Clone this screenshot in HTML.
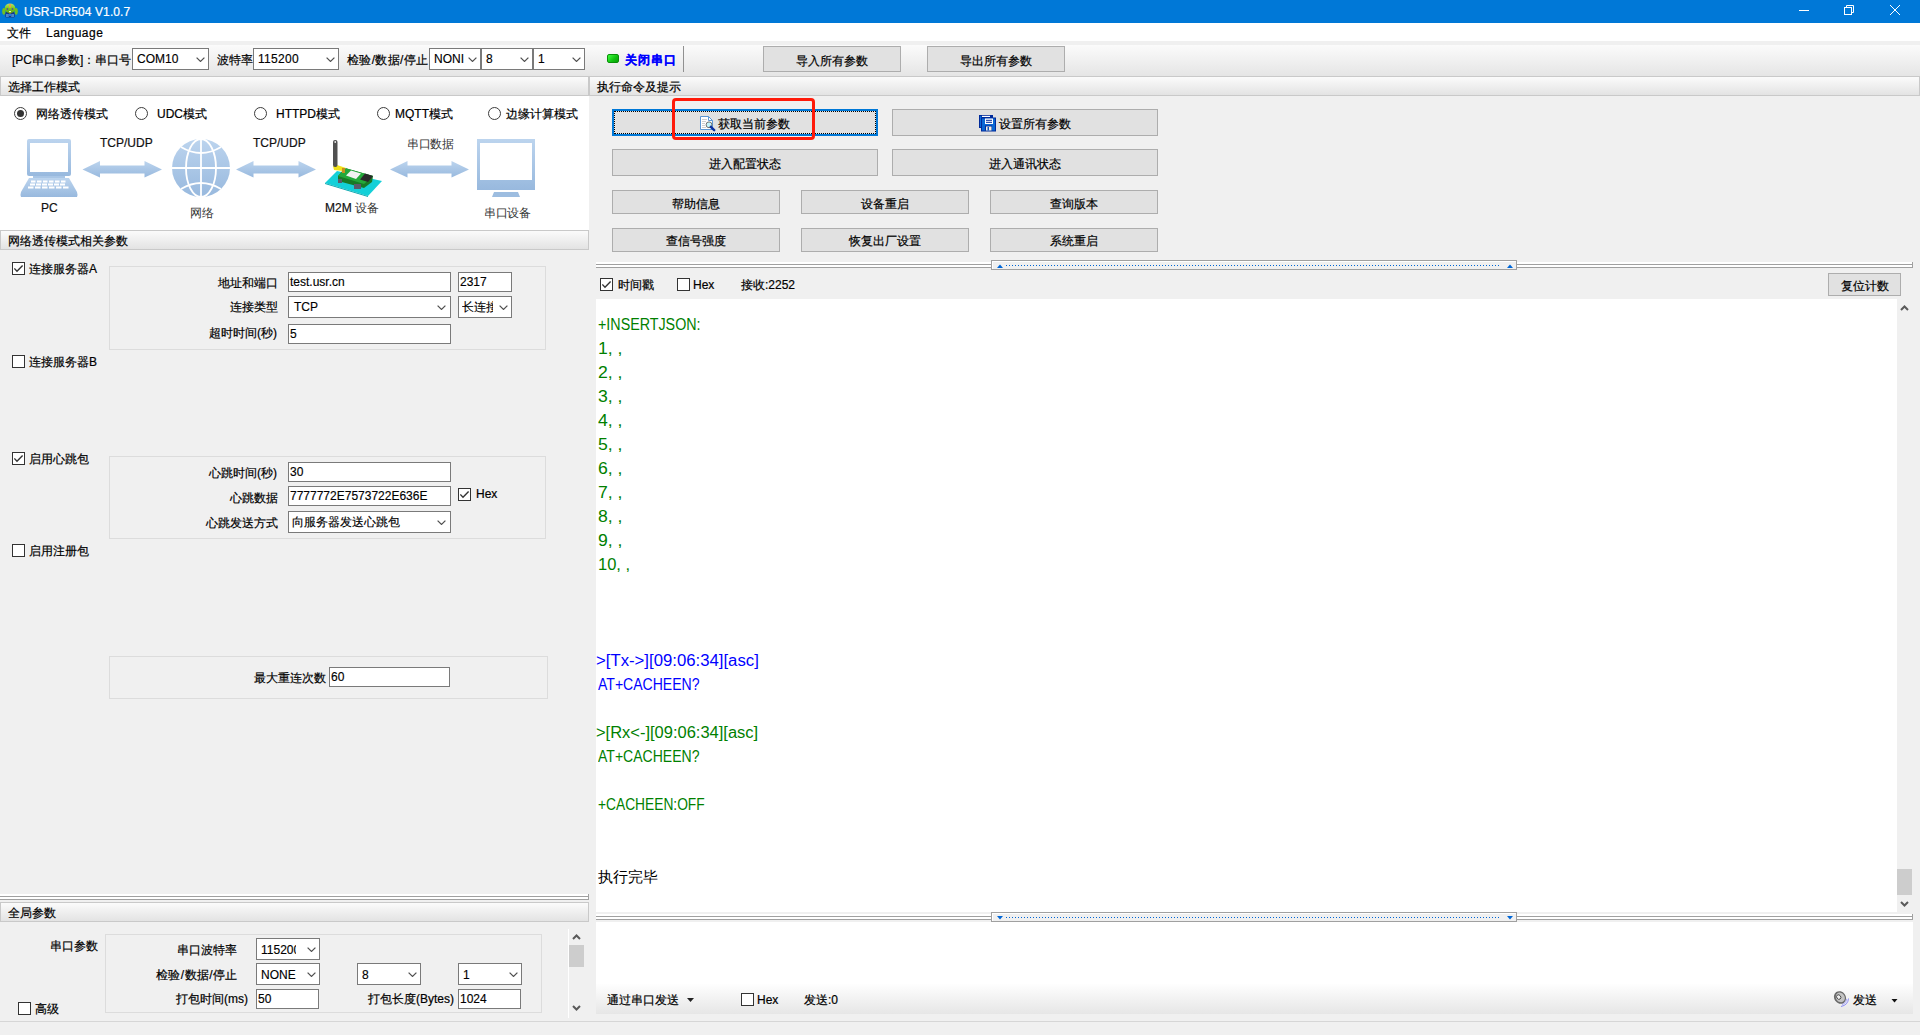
<!DOCTYPE html>
<html><head><meta charset="utf-8">
<style>
*{box-sizing:border-box}
html,body{margin:0;padding:0}
body{width:1920px;height:1035px;overflow:hidden;position:relative;background:#f0f0f0;font-family:"Liberation Sans",sans-serif;font-size:12px;color:#000}
.a{position:absolute}
.t{position:absolute;white-space:nowrap;line-height:14px;height:14px;-webkit-text-stroke:0.2px currentColor}
.hdr{position:absolute;height:20px;border:1px solid #c9c9c9;background:linear-gradient(#fbfbfb,#e3e3e3)}
.hdr span{position:absolute;left:7px;top:3px;line-height:14px;white-space:nowrap;-webkit-text-stroke:0.2px #000}
.btn{position:absolute;background:#e1e1e1;border:1px solid #adadad;text-align:center;white-space:nowrap}
.btn .t{left:0;right:0}
.inp{position:absolute;background:#fff;border:1px solid #7a7a7a;white-space:nowrap;overflow:hidden}
.inp span{position:absolute;left:2px;line-height:14px;-webkit-text-stroke:0.15px #000}
.chev{position:absolute;width:9px;height:5px}
.cb{position:absolute;width:13px;height:13px;border:1px solid #333;background:#fff}
.rd{position:absolute;width:13px;height:13px;border:1px solid #3c3c3c;border-radius:50%;background:#fff}
.grp{position:absolute;border:1px solid #dcdcdc}
.out{white-space:nowrap;font-size:16px;line-height:24px;height:24px}
.ck{-webkit-text-stroke:0.15px #000}
</style></head><body>
<div class="a" style="left:0;top:0;width:1920px;height:23px;background:#0078d7"></div>
<svg class="a" style="left:0;top:0" width="22" height="22" viewBox="0 0 22 22">
<defs><linearGradient id="gh" x1="0" y1="0" x2="0" y2="1"><stop offset="0" stop-color="#b8e070"/><stop offset="0.5" stop-color="#7cc81c"/><stop offset="1" stop-color="#5aa812"/></linearGradient></defs>
<rect x="5.3" y="12" width="9.4" height="5.5" rx="1" fill="#163a8c"/>
<rect x="6" y="14" width="2.8" height="3" fill="#4a86c8"/><rect x="11.2" y="14" width="2.8" height="3" fill="#4a86c8"/>
<rect x="9" y="14" width="2" height="2" fill="#1a7ae0"/>
<ellipse cx="3.8" cy="11.3" rx="1.6" ry="3.4" fill="#72c020"/><ellipse cx="16.2" cy="11.3" rx="1.6" ry="3.4" fill="#72c020"/>
<ellipse cx="10" cy="8.3" rx="5.3" ry="4.9" fill="url(#gh)"/>
<rect x="9.1" y="4" width="1.8" height="3.6" fill="#f0a040"/>
<circle cx="7.4" cy="9" r="0.9" fill="#5a4aa0"/><circle cx="12.5" cy="9" r="0.9" fill="#5a4aa0"/>
<rect x="9" y="11" width="2" height="0.9" fill="#f0f0f0"/>
<rect x="9.2" y="12.3" width="1.6" height="1.2" fill="#d0a020"/>
</svg>
<div class="t" style="left:24px;top:5px;color:#fff;letter-spacing:0.1px">USR-DR504 V1.0.7</div>
<div class="a" style="left:1799px;top:10px;width:10px;height:1px;background:#fff"></div>
<svg class="a" style="left:1843px;top:4px" width="12" height="12" viewBox="0 0 12 12"><rect x="1.5" y="3.5" width="7" height="7" fill="none" stroke="#fff"/><path d="M3.5 3.5 L3.5 1.5 L10.5 1.5 L10.5 8.5 L8.5 8.5" fill="none" stroke="#fff"/></svg>
<svg class="a" style="left:1889px;top:4px" width="12" height="12" viewBox="0 0 12 12"><path d="M1 1 L11 11 M11 1 L1 11" stroke="#fff" stroke-width="1"/></svg>
<div class="a" style="left:0;top:23px;width:1920px;height:18px;background:#fff"></div>
<div class="t" style="left:7px;top:26px;">文件</div>
<div class="t" style="left:46px;top:26px;letter-spacing:0.5px">Language</div>
<div class="a" style="left:0;top:45px;width:1920px;height:31px;background:linear-gradient(#fbfbfb,#e5e5e5)"></div>
<div class="t" style="left:12px;top:53px;">[PC串口参数]：串口号</div>
<div class="inp" style="left:132px;top:48px;width:77px;height:22px"><span style="top:3px;left:4px;">COM10</span><svg class="chev" style="left:63px;top:8px" viewBox="0 0 9 5"><path d="M0.6 0.6L4.5 4.4L8.4 0.6" fill="none" stroke="#505050" stroke-width="1.25"/></svg></div>
<div class="t" style="left:217px;top:53px;">波特率</div>
<div class="inp" style="left:253px;top:48px;width:86px;height:22px"><span style="top:3px;left:4px;letter-spacing:0.3px">115200</span><svg class="chev" style="left:72px;top:8px" viewBox="0 0 9 5"><path d="M0.6 0.6L4.5 4.4L8.4 0.6" fill="none" stroke="#505050" stroke-width="1.25"/></svg></div>
<div class="t" style="left:347px;top:53px;letter-spacing:0.35px">检验/数据/停止</div>
<div class="inp" style="left:429px;top:48px;width:52px;height:22px"><span style="top:3px;left:4px;width:33px;overflow:hidden">NONI</span><svg class="chev" style="left:38px;top:8px" viewBox="0 0 9 5"><path d="M0.6 0.6L4.5 4.4L8.4 0.6" fill="none" stroke="#505050" stroke-width="1.25"/></svg></div>
<div class="inp" style="left:481px;top:48px;width:52px;height:22px"><span style="top:3px;left:4px;">8</span><svg class="chev" style="left:38px;top:8px" viewBox="0 0 9 5"><path d="M0.6 0.6L4.5 4.4L8.4 0.6" fill="none" stroke="#505050" stroke-width="1.25"/></svg></div>
<div class="inp" style="left:533px;top:48px;width:52px;height:22px"><span style="top:3px;left:4px;">1</span><svg class="chev" style="left:38px;top:8px" viewBox="0 0 9 5"><path d="M0.6 0.6L4.5 4.4L8.4 0.6" fill="none" stroke="#505050" stroke-width="1.25"/></svg></div>
<div class="a" style="left:607px;top:54px;width:12px;height:9px;border-radius:2px;background:linear-gradient(135deg,#40ff40,#10c010 60%,#08a008);border:1px solid #089008"></div>
<div class="t" style="left:625px;top:53px;color:#0000ff;font-weight:bold;letter-spacing:1px">关闭串口</div>
<div class="a" style="left:683px;top:46px;width:1px;height:26px;background:#909090"></div>
<div class="btn" style="left:763px;top:46px;width:138px;height:26px"><span class="t" style="top:7px">导入所有参数</span></div>
<div class="btn" style="left:927px;top:46px;width:138px;height:26px"><span class="t" style="top:7px">导出所有参数</span></div>
<div class="hdr" style="left:0px;top:76px;width:589px"><span>选择工作模式</span></div>
<div class="hdr" style="left:589px;top:76px;width:1331px"><span>执行命令及提示</span></div>
<div class="a" style="left:0;top:96px;width:589px;height:134px;background:#fff"></div>
<div class="rd" style="left:14px;top:107px"><div class="a" style="left:2px;top:2px;width:7px;height:7px;border-radius:50%;background:#333"></div></div>
<div class="t" style="left:36px;top:107px;">网络透传模式</div>
<div class="rd" style="left:135px;top:107px"></div>
<div class="t" style="left:157px;top:107px;">UDC模式</div>
<div class="rd" style="left:254px;top:107px"></div>
<div class="t" style="left:276px;top:107px;">HTTPD模式</div>
<div class="rd" style="left:377px;top:107px"></div>
<div class="t" style="left:395px;top:107px;">MQTT模式</div>
<div class="rd" style="left:488px;top:107px"></div>
<div class="t" style="left:506px;top:107px;">边缘计算模式</div>
<svg class="a" style="left:0;top:96px" width="589" height="134" viewBox="0 96 589 134">
<defs>
<linearGradient id="bl" x1="0" y1="0" x2="0" y2="1"><stop offset="0" stop-color="#bcd4ee"/><stop offset="1" stop-color="#98b9de"/></linearGradient>
<linearGradient id="teal" x1="0" y1="0" x2="0" y2="1"><stop offset="0" stop-color="#2fd6d6"/><stop offset="1" stop-color="#10b8c0"/></linearGradient>
</defs>
<!-- laptop -->
<rect x="27" y="139" width="44" height="37" rx="2" fill="url(#bl)"/>
<rect x="30" y="143" width="38" height="29" fill="#fff"/>
<rect x="33" y="176" width="32" height="2" fill="#a9c6e6"/>
<path d="M29 178 L69 178 L77 192 Q78 195 77 197 L21 197 Q20 195 21 192 Z" fill="url(#bl)"/>
<g fill="#fff"><rect x="31" y="180.5" width="4.5" height="2"/><rect x="37" y="180.5" width="4.5" height="2"/><rect x="43" y="180.5" width="4.5" height="2"/><rect x="49" y="180.5" width="4.5" height="2"/><rect x="55" y="180.5" width="4.5" height="2"/><rect x="61" y="180.5" width="4.5" height="2"/><rect x="30" y="183.5" width="5" height="2"/><rect x="36" y="183.5" width="5" height="2"/><rect x="42" y="183.5" width="5" height="2"/><rect x="48" y="183.5" width="5" height="2"/><rect x="54" y="183.5" width="5" height="2"/><rect x="60" y="183.5" width="5" height="2"/><rect x="28" y="186.5" width="5.5" height="2"/><rect x="35" y="186.5" width="5.5" height="2"/><rect x="42" y="186.5" width="5.5" height="2"/><rect x="49" y="186.5" width="5.5" height="2"/><rect x="56" y="186.5" width="5.5" height="2"/><rect x="63" y="186.5" width="5.5" height="2"/></g>
<!-- arrows -->
<path id="arr" d="M82.5 169.5 L100 161 L100 165.5 L144.5 165.5 L144.5 161 L162 169.5 L144.5 177.5 L144.5 173.5 L100 173.5 L100 177.5 Z" fill="url(#bl)"/>
<path d="M236 169.5 L253.5 161 L253.5 165.5 L298.5 165.5 L298.5 161 L316 169.5 L298.5 177.5 L298.5 173.5 L253.5 173.5 L253.5 177.5 Z" fill="url(#bl)"/>
<path d="M390 169.5 L407.5 161 L407.5 165.5 L451.5 165.5 L451.5 161 L469 169.5 L451.5 177.5 L451.5 173.5 L407.5 173.5 L407.5 177.5 Z" fill="url(#bl)"/>
<!-- globe -->
<circle cx="201" cy="168" r="29" fill="url(#bl)"/>
<g fill="none" stroke="#fff" stroke-width="1.8">
<line x1="201" y1="139" x2="201" y2="197"/>
<line x1="172" y1="168" x2="230" y2="168"/>
<ellipse cx="201" cy="168" rx="15" ry="29"/>
<path d="M181 147 Q201 159 221 147"/>
<path d="M181 189 Q201 177 221 189"/>
</g>
<!-- M2M device -->
<path d="M325 183 L337 171 L382 181 L368 196 Z" fill="#14d0d8"/>
<path d="M325 183 L368 196 L368 197 L325 184 Z" fill="#0aa8b0"/>
<path d="M338 176 L345 168 L373 176 L372 182 L364 188 L338 181 Z" fill="#187a26"/>
<path d="M338 176 L345 168 L373 176 L364 184 Z" fill="#24a83a"/>
<path d="M346 175.5 L351 170.5 L361 173.5 L356 179 Z" fill="#f2f2f2"/>
<path d="M360 179.5 L365 173.5 L373 176 L368 182 Z" fill="#2a2a2a"/>
<rect x="338" y="179" width="4" height="4" fill="#5a5a6a"/>
<rect x="354" y="184" width="7" height="5" fill="#5a5a6a"/>
<path d="M333 166 L337 165 L346 168 L343 171 L334 170 Z" fill="#f2e21a"/>
<rect x="342" y="168" width="3" height="5" fill="#c89020"/>
<rect x="333" y="140" width="4.5" height="27" rx="2" fill="#505050"/>
<rect x="334.5" y="141" width="1.5" height="2" fill="#d8d8d8"/>
<!-- monitor -->
<rect x="477" y="139" width="58" height="51" fill="url(#bl)"/>
<rect x="480" y="143" width="52" height="37" fill="#fff"/>
<path d="M494 192 L518 192 L520 197 L492 197 Z" fill="#9dbde0"/>
</svg>
<div class="t" style="left:100px;top:136px;color:#111">TCP/UDP</div>
<div class="t" style="left:253px;top:136px;color:#111">TCP/UDP</div>
<div class="t" style="left:407px;top:137px;color:#333;-webkit-text-stroke:0;letter-spacing:-0.3px">串口数据</div>
<div class="t" style="left:41px;top:201px;color:#111">PC</div>
<div class="t" style="left:190px;top:206px;color:#333;-webkit-text-stroke:0">网络</div>
<div class="t" style="left:325px;top:201px;color:#111">M2M <span style="-webkit-text-stroke:0;color:#333">设备</span></div>
<div class="t" style="left:484px;top:206px;color:#333;-webkit-text-stroke:0;letter-spacing:-0.3px">串口设备</div>
<div class="hdr" style="left:0px;top:230px;width:589px"><span>网络透传模式相关参数</span></div>
<div class="btn" style="left:612px;top:109px;width:266px;height:27px;border:2px solid #0078d7"><div class="a" style="left:0;top:0;right:0;bottom:0;border:1px dotted #000"></div>
<svg class="a" style="left:86px;top:5px" width="16" height="16" viewBox="0 0 16 16"><path d="M0.5 0.5 H8.5 L12.5 4.5 V13.5 H0.5 Z" fill="#fff" stroke="#5b96d4"/><path d="M8.5 0.5 V4.5 H12.5" fill="none" stroke="#5b96d4"/><g fill="#cfcfcf"><rect x="2" y="3" width="5" height="1"/><rect x="2" y="5" width="4" height="1"/><rect x="2" y="7" width="3" height="1"/><rect x="2" y="9" width="3" height="1"/><rect x="2" y="11" width="4" height="1"/></g><circle cx="9" cy="8.8" r="2.9" fill="#c4f4fb" stroke="#707070" stroke-width="1"/><path d="M10.8 10.8 L14.2 14.2" stroke="#0a2fa0" stroke-width="2.4" stroke-linecap="round"/></svg>
<span class="t" style="left:104px;right:auto;top:6px">获取当前参数</span></div>
<div class="btn" style="left:892px;top:109px;width:266px;height:27px">
<svg class="a" style="left:86px;top:5px" width="17" height="17" viewBox="0 0 17 17"><rect x="0" y="0" width="14" height="13" fill="#002a9a"/><rect x="1" y="1" width="1.5" height="11" fill="#0a6ad8"/><rect x="3" y="0.8" width="8" height="1.2" fill="#fff"/><rect x="2" y="2.5" width="15" height="14" fill="#002a9a"/><rect x="3" y="3.5" width="13" height="12" fill="#0a68d4"/><rect x="6" y="3.5" width="8" height="5.5" fill="#fff"/><rect x="7" y="4.8" width="6" height="1" fill="#002a9a"/><rect x="7" y="6.8" width="6" height="1" fill="#002a9a"/><rect x="6" y="10.5" width="7" height="5" fill="#002a9a"/><rect x="7" y="11.5" width="5.5" height="4" fill="#f4f0e0"/><rect x="8.5" y="12" width="1.5" height="3.5" fill="#0a50c0"/></svg>
<span class="t" style="left:106px;right:auto;top:7px">设置所有参数</span></div>
<div class="btn" style="left:612px;top:149px;width:266px;height:27px"><span class="t" style="top:7px">进入配置状态</span></div>
<div class="btn" style="left:892px;top:149px;width:266px;height:27px"><span class="t" style="top:7px">进入通讯状态</span></div>
<div class="btn" style="left:612px;top:190px;width:168px;height:24px"><span class="t" style="top:6px">帮助信息</span></div>
<div class="btn" style="left:801px;top:190px;width:168px;height:24px"><span class="t" style="top:6px">设备重启</span></div>
<div class="btn" style="left:990px;top:190px;width:168px;height:24px"><span class="t" style="top:6px">查询版本</span></div>
<div class="btn" style="left:612px;top:228px;width:168px;height:24px"><span class="t" style="top:5px">查信号强度</span></div>
<div class="btn" style="left:801px;top:228px;width:168px;height:24px"><span class="t" style="top:5px">恢复出厂设置</span></div>
<div class="btn" style="left:990px;top:228px;width:168px;height:24px"><span class="t" style="top:5px">系统重启</span></div>
<div class="a" style="left:672px;top:98px;width:143px;height:42px;border:3px solid #ff1a0a;border-radius:4px"></div>
<div class="cb" style="left:12px;top:262px"><svg class="a" style="left:1px;top:1px" width="11" height="11" viewBox="0 0 11 11"><path d="M0.3 4.4 L3 7.2 L8.6 1.5" fill="none" stroke="#333" stroke-width="1.4"/></svg></div>
<div class="t" style="left:29px;top:262px;">连接服务器A</div>
<div class="grp" style="left:109px;top:266px;width:437px;height:84px"></div>
<div class="t" style="left:218px;top:276px;">地址和端口</div>
<div class="inp" style="left:288px;top:272px;width:163px;height:20px"><span style="top:2px;left:1px">test.usr.cn</span></div>
<div class="inp" style="left:458px;top:272px;width:54px;height:20px"><span style="top:2px;left:1px">2317</span></div>
<div class="t" style="left:230px;top:300px;">连接类型</div>
<div class="inp" style="left:288px;top:296px;width:163px;height:22px"><span style="top:3px;left:5px;">TCP</span><svg class="chev" style="left:148px;top:8px" viewBox="0 0 9 5"><path d="M0.6 0.6L4.5 4.4L8.4 0.6" fill="none" stroke="#505050" stroke-width="1.25"/></svg></div>
<div class="inp" style="left:458px;top:296px;width:54px;height:22px"><span style="top:3px;left:3px;width:31px;overflow:hidden">长连接</span><svg class="chev" style="left:40px;top:8px" viewBox="0 0 9 5"><path d="M0.6 0.6L4.5 4.4L8.4 0.6" fill="none" stroke="#505050" stroke-width="1.25"/></svg></div>
<div class="t" style="left:209px;top:326px;">超时时间(秒)</div>
<div class="inp" style="left:288px;top:324px;width:163px;height:20px"><span style="top:2px;left:1px">5</span></div>
<div class="cb" style="left:12px;top:355px"></div>
<div class="t" style="left:29px;top:355px;">连接服务器B</div>
<div class="cb" style="left:12px;top:452px"><svg class="a" style="left:1px;top:1px" width="11" height="11" viewBox="0 0 11 11"><path d="M0.3 4.4 L3 7.2 L8.6 1.5" fill="none" stroke="#333" stroke-width="1.4"/></svg></div>
<div class="t" style="left:29px;top:452px;">启用心跳包</div>
<div class="grp" style="left:109px;top:456px;width:437px;height:83px"></div>
<div class="t" style="left:209px;top:466px;">心跳时间(秒)</div>
<div class="inp" style="left:288px;top:462px;width:163px;height:20px"><span style="top:2px;left:1px">30</span></div>
<div class="t" style="left:230px;top:491px;">心跳数据</div>
<div class="inp" style="left:288px;top:486px;width:163px;height:20px"><span style="top:2px;left:1px">7777772E7573722E636E</span></div>
<div class="cb" style="left:458px;top:488px"><svg class="a" style="left:1px;top:1px" width="11" height="11" viewBox="0 0 11 11"><path d="M0.3 4.4 L3 7.2 L8.6 1.5" fill="none" stroke="#333" stroke-width="1.4"/></svg></div>
<div class="t" style="left:476px;top:487px;">Hex</div>
<div class="t" style="left:206px;top:516px;">心跳发送方式</div>
<div class="inp" style="left:288px;top:511px;width:163px;height:22px"><span style="top:3px;left:3px;">向服务器发送心跳包</span><svg class="chev" style="left:148px;top:8px" viewBox="0 0 9 5"><path d="M0.6 0.6L4.5 4.4L8.4 0.6" fill="none" stroke="#505050" stroke-width="1.25"/></svg></div>
<div class="cb" style="left:12px;top:544px"></div>
<div class="t" style="left:29px;top:544px;">启用注册包</div>
<div class="grp" style="left:109px;top:656px;width:439px;height:43px"></div>
<div class="t" style="left:254px;top:671px;">最大重连次数</div>
<div class="inp" style="left:329px;top:667px;width:121px;height:20px"><span style="top:2px;left:1px">60</span></div>
<div class="a" style="left:0px;top:894px;width:588px;height:6px;background:#fff;border-bottom:1px solid #a0a0a0"></div>
<div class="a" style="left:0px;top:896px;width:588px;height:1px;background:#a0a0a0"></div>
<div class="a" style="left:588px;top:894px;width:1px;height:6px;background:#a0a0a0"></div>
<div class="hdr" style="left:0px;top:902px;width:589px"><span>全局参数</span></div>
<div class="t" style="left:50px;top:939px;">串口参数</div>
<div class="grp" style="left:105px;top:934px;width:437px;height:79px"></div>
<div class="t" style="left:177px;top:943px;">串口波特率</div>
<div class="inp" style="left:256px;top:938px;width:64px;height:22px"><span style="top:4px;left:4px;width:35px;overflow:hidden">115200</span><svg class="chev" style="left:50px;top:8px" viewBox="0 0 9 5"><path d="M0.6 0.6L4.5 4.4L8.4 0.6" fill="none" stroke="#505050" stroke-width="1.25"/></svg></div>
<div class="t" style="left:156px;top:968px;letter-spacing:0.4px">检验/数据/停止</div>
<div class="inp" style="left:256px;top:963px;width:64px;height:22px"><span style="top:4px;left:4px;">NONE</span><svg class="chev" style="left:50px;top:8px" viewBox="0 0 9 5"><path d="M0.6 0.6L4.5 4.4L8.4 0.6" fill="none" stroke="#505050" stroke-width="1.25"/></svg></div>
<div class="inp" style="left:357px;top:963px;width:64px;height:22px"><span style="top:4px;left:4px;">8</span><svg class="chev" style="left:50px;top:8px" viewBox="0 0 9 5"><path d="M0.6 0.6L4.5 4.4L8.4 0.6" fill="none" stroke="#505050" stroke-width="1.25"/></svg></div>
<div class="inp" style="left:458px;top:963px;width:64px;height:22px"><span style="top:4px;left:4px;">1</span><svg class="chev" style="left:50px;top:8px" viewBox="0 0 9 5"><path d="M0.6 0.6L4.5 4.4L8.4 0.6" fill="none" stroke="#505050" stroke-width="1.25"/></svg></div>
<div class="t" style="left:176px;top:992px;">打包时间(ms)</div>
<div class="inp" style="left:256px;top:989px;width:63px;height:20px"><span style="top:2px;left:1px">50</span></div>
<div class="t" style="left:368px;top:992px;">打包长度(Bytes)</div>
<div class="inp" style="left:458px;top:989px;width:63px;height:20px"><span style="top:2px;left:1px">1024</span></div>
<div class="cb" style="left:18px;top:1002px"></div>
<div class="t" style="left:35px;top:1002px;">高级</div>
<div class="a" style="left:568px;top:929px;width:1px;height:89px;background:#fff"></div>
<svg class="a" style="left:572px;top:934px" width="9" height="6" viewBox="0 0 9 6"><path d="M1 5 L4.5 1.5 L8 5" fill="none" stroke="#5a5a5a" stroke-width="2"/></svg>
<div class="a" style="left:569px;top:945px;width:15px;height:22px;background:#cdcdcd"></div>
<svg class="a" style="left:572px;top:1005px" width="9" height="6" viewBox="0 0 9 6"><path d="M1 1 L4.5 4.5 L8 1" fill="none" stroke="#5a5a5a" stroke-width="2"/></svg>
<div class="a" style="left:0;top:1021px;width:1920px;height:1px;background:#d6d6d6"></div>
<div class="a" style="left:596px;top:262px;width:1316px;height:6px;background:#fff;border-bottom:1px solid #a0a0a0"></div>
<div class="a" style="left:596px;top:264px;width:1316px;height:1px;background:#a0a0a0"></div>
<div class="a" style="left:1912px;top:262px;width:1px;height:6px;background:#a0a0a0"></div>
<div class="a" style="left:991px;top:260px;width:526px;height:10px;border:1px solid #a0a0a0;background:#f0f0f0;box-shadow:inset 1px 1px 0 #fff"></div>
<svg class="a" style="left:997px;top:264px" width="516" height="4" viewBox="0 0 516 4"><defs><pattern id="dp264" x="9" y="0" width="3" height="4" patternUnits="userSpaceOnUse"><rect x="0" y="1" width="1" height="1" fill="#0066d6"/></pattern></defs><path d="M0 4 L3 0.5 L6 4 Z" fill="#0066d6"/><rect x="9" y="0" width="493" height="4" fill="url(#dp264)"/><g transform="translate(510,0)"><path d="M0 4 L3 0.5 L6 4 Z" fill="#0066d6"/></g></svg>
<div class="cb" style="left:600px;top:278px"><svg class="a" style="left:1px;top:1px" width="11" height="11" viewBox="0 0 11 11"><path d="M0.3 4.4 L3 7.2 L8.6 1.5" fill="none" stroke="#333" stroke-width="1.4"/></svg></div>
<div class="t" style="left:618px;top:278px;">时间戳</div>
<div class="cb" style="left:677px;top:278px"></div>
<div class="t" style="left:693px;top:278px;">Hex</div>
<div class="t" style="left:741px;top:278px;">接收:2252</div>
<div class="btn" style="left:1828px;top:273px;width:73px;height:23px"><span class="t" style="top:5px">复位计数</span></div>
<div class="a" style="left:596px;top:299px;width:1301px;height:613px;background:#fff"></div>
<svg class="a" style="left:1900px;top:305px" width="9" height="6" viewBox="0 0 9 6"><path d="M1 5 L4.5 1.5 L8 5" fill="none" stroke="#5a5a5a" stroke-width="2"/></svg>
<div class="a" style="left:1897px;top:869px;width:15px;height:26px;background:#cdcdcd"></div>
<svg class="a" style="left:1900px;top:901px" width="9" height="6" viewBox="0 0 9 6"><path d="M1 1 L4.5 4.5 L8 1" fill="none" stroke="#5a5a5a" stroke-width="2"/></svg>
<div class="a" style="left:598px;top:313px"><div class="out" style="color:#008000;"><span style="display:inline-block;transform:scaleX(0.893);transform-origin:0 0">+INSERTJSON:</span></div><div class="out" style="color:#008000;"><span style="display:inline-block;transform:scaleX(1.1);transform-origin:0 0">1, ,</span></div><div class="out" style="color:#008000;"><span style="display:inline-block;transform:scaleX(1.1);transform-origin:0 0">2, ,</span></div><div class="out" style="color:#008000;"><span style="display:inline-block;transform:scaleX(1.1);transform-origin:0 0">3, ,</span></div><div class="out" style="color:#008000;"><span style="display:inline-block;transform:scaleX(1.1);transform-origin:0 0">4, ,</span></div><div class="out" style="color:#008000;"><span style="display:inline-block;transform:scaleX(1.1);transform-origin:0 0">5, ,</span></div><div class="out" style="color:#008000;"><span style="display:inline-block;transform:scaleX(1.1);transform-origin:0 0">6, ,</span></div><div class="out" style="color:#008000;"><span style="display:inline-block;transform:scaleX(1.1);transform-origin:0 0">7, ,</span></div><div class="out" style="color:#008000;"><span style="display:inline-block;transform:scaleX(1.1);transform-origin:0 0">8, ,</span></div><div class="out" style="color:#008000;"><span style="display:inline-block;transform:scaleX(1.1);transform-origin:0 0">9, ,</span></div><div class="out" style="color:#008000;"><span style="display:inline-block;transform:scaleX(1.03);transform-origin:0 0">10, ,</span></div><div class="out"></div><div class="out"></div><div class="out"></div><div class="out" style="color:#0000ff;margin-left:-2px"><span style="display:inline-block;transform:scaleX(1.046);transform-origin:0 0">&gt;[Tx-&gt;][09:06:34][asc]</span></div><div class="out" style="color:#0000ff;"><span style="display:inline-block;transform:scaleX(0.877);transform-origin:0 0">AT+CACHEEN?</span></div><div class="out"></div><div class="out" style="color:#008000;margin-left:-2px"><span style="display:inline-block;transform:scaleX(1.03);transform-origin:0 0">&gt;[Rx&lt;-][09:06:34][asc]</span></div><div class="out" style="color:#008000;"><span style="display:inline-block;transform:scaleX(0.877);transform-origin:0 0">AT+CACHEEN?</span></div><div class="out"></div><div class="out" style="color:#008000;"><span style="display:inline-block;transform:scaleX(0.86);transform-origin:0 0">+CACHEEN:OFF</span></div><div class="out"></div><div class="out"></div><div class="out" style="color:#000;font-size:15px"><span style="display:inline-block;transform:scaleX(1.0);transform-origin:0 0">执行完毕</span></div></div>
<div class="a" style="left:596px;top:914px;width:1316px;height:6px;background:#fff;border-bottom:1px solid #a0a0a0"></div>
<div class="a" style="left:596px;top:916px;width:1316px;height:1px;background:#a0a0a0"></div>
<div class="a" style="left:1912px;top:914px;width:1px;height:6px;background:#a0a0a0"></div>
<div class="a" style="left:991px;top:912px;width:526px;height:10px;border:1px solid #a0a0a0;background:#f0f0f0;box-shadow:inset 1px 1px 0 #fff"></div>
<svg class="a" style="left:997px;top:916px" width="516" height="4" viewBox="0 0 516 4"><defs><pattern id="dp916" x="9" y="0" width="3" height="4" patternUnits="userSpaceOnUse"><rect x="0" y="1" width="1" height="1" fill="#0066d6"/></pattern></defs><path d="M0 0 L6 0 L3 3.5 Z" fill="#0066d6"/><rect x="9" y="0" width="493" height="4" fill="url(#dp916)"/><g transform="translate(510,0)"><path d="M0 0 L6 0 L3 3.5 Z" fill="#0066d6"/></g></svg>
<div class="a" style="left:596px;top:922px;width:1317px;height:62px;background:#fff"></div>
<div class="a" style="left:596px;top:984px;width:1317px;height:30px;background:linear-gradient(#fefefe,#e6e6e6)"></div>
<div class="t" style="left:607px;top:993px;">通过串口发送</div>
<svg class="a" style="left:687px;top:998px" width="7" height="4" viewBox="0 0 7 4"><path d="M0 0 L7 0 L3.5 4 Z" fill="#222"/></svg>
<div class="cb" style="left:741px;top:993px"></div>
<div class="t" style="left:757px;top:993px;">Hex</div>
<div class="t" style="left:804px;top:993px;">发送:0</div>
<svg class="a" style="left:1832px;top:990px" width="20" height="19" viewBox="0 0 20 19"><g transform="rotate(-35 8 7.5)"><ellipse cx="8" cy="7.5" rx="5.8" ry="6.6" fill="#6a6a6a"/><ellipse cx="8.3" cy="7.6" rx="4.3" ry="5.1" fill="#c4c4c4"/><ellipse cx="7.2" cy="6.4" rx="2" ry="2.4" fill="#f0f0f0" stroke="#4a4a4a" stroke-width="0.9"/></g><path d="M9 16.5 Q16 15 16.5 8.5" fill="none" stroke="#8a8af8" stroke-width="1"/><path d="M10 14.5 Q14.5 13 14.5 9" fill="none" stroke="#a0a0f8" stroke-width="0.9"/></svg>
<div class="t" style="left:1853px;top:993px;">发送</div>
<svg class="a" style="left:1891px;top:999px" width="7" height="4" viewBox="0 0 7 4"><path d="M0.5 0 L6.5 0 L3.5 3.5 Z" fill="#111"/></svg>
</body></html>
